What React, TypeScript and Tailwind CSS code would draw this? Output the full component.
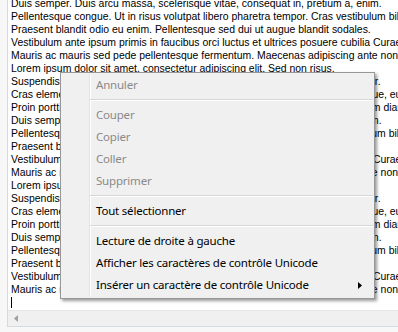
const lines = [
  'Duis semper. Duis arcu massa, scelerisque vitae, consequat in, pretium a, enim.',
  'Pellentesque congue. Ut in risus volutpat libero pharetra tempor. Cras vestibulum bibendum augue.',
  'Praesent blandit odio eu enim. Pellentesque sed dui ut augue blandit sodales.',
  'Vestibulum ante ipsum primis in faucibus orci luctus et ultrices posuere cubilia Curae; Aliquam nibh.',
  'Mauris ac mauris sed pede pellentesque fermentum. Maecenas adipiscing ante non diam sodales hendrerit.',
  'Lorem ipsum dolor sit amet, consectetur adipiscing elit. Sed non risus.',
  'Suspendisse lectus tortor, dignissim sit amet, adipiscing nec, ultricies sed, dolor.',
  'Cras elementum ultrices diam. Maecenas ligula massa, varius a, semper congue, euismod non, mi.',
  'Proin porttitor, orci nec nonummy molestie, enim est eleifend mi, non fermentum diam nisl sit amet erat.',
]

// 23 lignes visibles, le texte se répète
const visible = Array.from({ length: 23 }, (_, i) => lines[i % 9])

type Item = { label: string; disabled?: boolean; sub?: boolean } | 'sep'

const menu: Item[] = [
  { label: 'Annuler', disabled: true },
  'sep',
  { label: 'Couper', disabled: true },
  { label: 'Copier', disabled: true },
  { label: 'Coller', disabled: true },
  { label: 'Supprimer', disabled: true },
  'sep',
  { label: 'Tout sélectionner' },
  'sep',
  { label: 'Lecture de droite à gauche' },
  { label: 'Afficher les caractères de contrôle Unicode' },
  { label: 'Insérer un caractère de contrôle Unicode', sub: true },
]

export default function App() {
  return (
    <div className="relative h-[332px] w-[398px] overflow-hidden bg-[#f7f7f7]">
      {/* Zone de texte */}
      <div className="ml-[7px] flex h-[327px] flex-col border-b border-l border-[#d3dbe2] bg-white">
        <div className="flex-1 overflow-hidden pl-[3px] font-['Liberation_Sans',Arial,sans-serif] text-[10.45px] leading-[13px] text-black">
          <div className="-mt-[3px]">
            {visible.map((l, i) => (
              <div key={i} className="whitespace-nowrap">
                {l}
              </div>
            ))}
            <div className="h-[13px] pt-[1px]">
              <div className="h-[11px] w-px bg-black" />
            </div>
          </div>
        </div>
        <div className="flex h-[16px] items-center border-t border-[#e6e6e6] bg-[#f0f0f0] pl-[6px]">
          <svg width="4" height="7" viewBox="0 0 4 7">
            <path d="M4 0 L0 3.5 L4 7 Z" fill="#a0a0a0" />
          </svg>
        </div>
      </div>

      {/* Menu contextuel */}
      <div className="absolute left-[60px] top-[72px] w-[315px] border border-[#979797] bg-[#f0f0f0] pb-[2px] pt-[1px] font-['Noto_Sans','Open_Sans',sans-serif] text-[11.5px] tracking-[-0.2px] shadow-[2px_2px_3px_rgba(0,0,0,0.4)]">
        <div className="absolute bottom-[2px] left-[28px] top-[1px] w-px bg-[#e2e3e3]" />
        <div className="absolute bottom-[2px] left-[29px] top-[1px] w-px bg-white" />
        {menu.map((it, i) =>
          it === 'sep' ? (
            <div key={i} className="relative h-[8px] pt-[3px]">
              <div className="ml-[29px] mr-[1px] h-px bg-[#d7d7d7]" />
              <div className="ml-[29px] mr-[1px] h-px bg-white" />
            </div>
          ) : (
            <div
              key={i}
              className={`relative flex h-[22px] items-center pl-[35px] pr-[12px] ${
                it.disabled ? 'text-[#8a8a8a]' : 'text-black'
              }`}
            >
              <span className="flex-1 whitespace-nowrap">{it.label}</span>
              {it.sub && (
                <svg width="4" height="7" viewBox="0 0 4 7">
                  <path d="M0 0 L4 3.5 L0 7 Z" fill="#000" />
                </svg>
              )}
            </div>
          )
        )}
      </div>
    </div>
  )
}
